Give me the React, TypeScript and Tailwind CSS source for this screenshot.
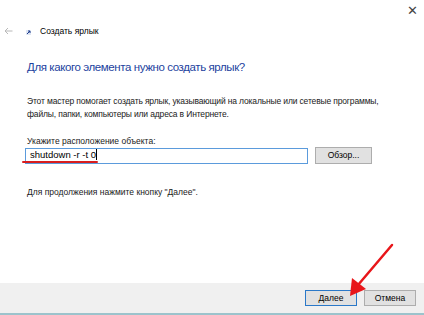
export default function App() {
  return (
    <div
      className="relative w-[424px] h-[315px] bg-white flex flex-col overflow-hidden text-black"
      style={{ fontFamily: '"Liberation Sans", Arial, sans-serif' }}
    >
      {/* title bar */}
      <div className="h-[21px] flex justify-end items-center pr-[6px]">
        <span className="text-[13px] leading-none text-[#444]">✕</span>
      </div>

      {/* wizard header */}
      <div className="h-[20px] flex items-center">
        <svg width="9" height="8" viewBox="0 0 9 8" className="ml-[4px]">
          <path d="M8.5 4H1M4 1L1 4l3 3" fill="none" stroke="#b8b8b8" strokeWidth="1" />
        </svg>
        <svg width="5" height="5" viewBox="0 0 5 5" className="ml-[13px] mt-[3px]">
          <rect x="0" y="0" width="5" height="5" fill="#dfe6f2" />
          <path d="M1 4L4 1M2 1h2v2" fill="none" stroke="#1c3a8c" strokeWidth="1" />
        </svg>
        <span className="ml-[9px] text-[8.5px] leading-none">Создать ярлык</span>
      </div>

      {/* content */}
      <div className="pl-[27px] flex flex-col">
        <h1 className="mt-[18px] text-[11.5px] leading-[16px] tracking-[-0.4px] text-[#1c3f9e] whitespace-nowrap">
          Для какого элемента нужно создать ярлык?
        </h1>

        <p className="mt-[20px] text-[8.5px] leading-[13px] tracking-[-0.15px] text-[#1a1a1a] whitespace-nowrap">
          Этот мастер помогает создать ярлык, указывающий на локальные или сетевые программы,
          <br />
          файлы, папки, компьютеры или адреса в Интернете.
        </p>

        <div className="mt-[14px] text-[8.5px] leading-[12px] text-[#1a1a1a]">
          Укажите расположение объекта:
        </div>

        <div className="flex items-center">
          <div className="relative w-[283px] h-[16px] border border-[#5b9bdc] -ml-[2px] flex items-start pl-[4px]">
            <span className="text-[9.5px] leading-[11px]">shutdown -r -t 0</span>
            <span className="w-px h-[11px] bg-black" />
            <span className="absolute left-[-4px] top-[12px] w-[76px] h-[2px] bg-[#d81e1e] rounded-full" />
          </div>
          <button className="ml-[7px] w-[57px] h-[17px] bg-[#e1e1e1] border border-[#adadad] text-[8.5px] leading-none">
            Обзор...
          </button>
        </div>

        <div className="mt-[22px] text-[8.5px] leading-[12px] text-[#1a1a1a]">
          Для продолжения нажмите кнопку "Далее".
        </div>
      </div>

      {/* footer */}
      <div className="mt-auto h-[32px] bg-[#f0f0f0] border-b-2 border-[#9cc3cc] flex items-center justify-end gap-[7px] pr-[8px]">
        <button className="w-[52px] h-[16px] bg-[#e1e1e1] border border-[#2a78c8] text-[8.5px] leading-none">
          Далее
        </button>
        <button className="w-[52px] h-[16px] bg-[#e1e1e1] border border-[#adadad] text-[8.5px] leading-none">
          Отмена
        </button>
      </div>

      {/* red arrow annotation */}
      <svg className="absolute left-0 top-0" width="424" height="315" viewBox="0 0 424 315">
        <line x1="392" y1="245" x2="358" y2="285" stroke="#e8161a" strokeWidth="2.5" strokeLinecap="round" />
        <polygon points="350,296 352,278 366,289" fill="#e8161a" />
      </svg>
    </div>
  );
}
